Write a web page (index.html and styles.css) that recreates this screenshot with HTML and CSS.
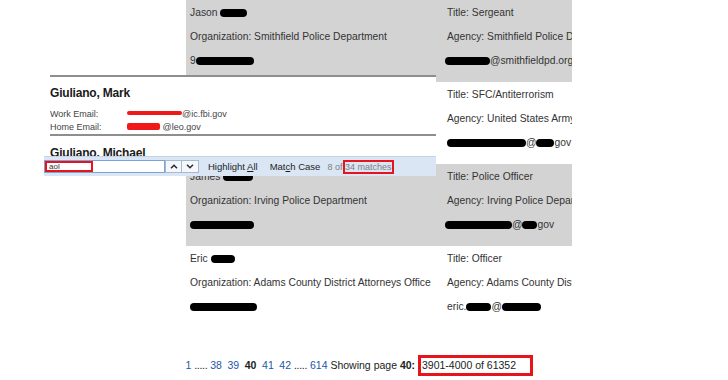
FILE: index.html
```html
<!DOCTYPE html>
<html lang="en">
<head>
    <meta charset="UTF-8">
    <meta name="viewport" content="width=device-width, initial-scale=1.0">
    <title>Directory search results</title>
    <link rel="stylesheet" href="styles.css">
</head>
<body>
    <div class="page">
        <div class="results">
            <div class="row alt">
                <div class="cell person">
                    <p>Jason <span class="ink" style="width:27px"></span></p>
                    <p>Organization: Smithfield Police Department</p>
                    <p>9<span class="ink" style="width:58px"></span></p>
                </div>
                <div class="cell contact">
                    <p>Title: Sergeant</p>
                    <p>Agency: Smithfield Police Department</p>
                    <p><span class="ink lead" style="width:45px"></span>@smithfieldpd.org</p>
                </div>
            </div>
            <div class="row">
                <div class="cell person"></div>
                <div class="cell contact">
                    <p>Title: SFC/Antiterrorism</p>
                    <p>Agency: United States Army</p>
                    <p><span class="ink" style="width:79px"></span>@<span class="ink" style="width:18px"></span>gov</p>
                </div>
            </div>
            <div class="row alt">
                <div class="cell person">
                    <p>James <span class="ink" style="width:30px"></span></p>
                    <p>Organization: Irving Police Department</p>
                    <p><span class="ink" style="width:64px"></span></p>
                </div>
                <div class="cell contact">
                    <p>Title: Police Officer</p>
                    <p>Agency: Irving Police Department</p>
                    <p><span class="ink lead" style="width:67px"></span>@<span class="ink" style="width:15px"></span>gov</p>
                </div>
            </div>
            <div class="row">
                <div class="cell person">
                    <p>Eric <span class="ink" style="width:24px"></span></p>
                    <p>Organization: Adams County District Attorneys Office</p>
                    <p><span class="ink" style="width:67px"></span></p>
                </div>
                <div class="cell contact">
                    <p>Title: Officer</p>
                    <p>Agency: Adams County District Attorneys Office</p>
                    <p>eric.<span class="ink" style="width:25px"></span>@<span class="ink" style="width:39px"></span></p>
                </div>
            </div>
        </div>

        <div class="pager">
            <a class="n" href="#">1</a> <span class="dots">.....</span> <a class="n" href="#">38</a> <a class="n" href="#">39</a> <b class="n">40</b> <a class="n" href="#">41</a> <a class="n" href="#">42</a> <span class="dots">.....</span> <a class="n" href="#">614</a> Showing page <b>40:</b> <span class="marked">3901-4000 of 61352</span>
        </div>

        <!-- pasted screenshot of the address book with the find bar open -->
        <div class="shot">
            <div class="cards">
                <div class="card">
                    <h4>Giuliano, Mark</h4>
                    <div class="mail">
                        <div><span class="label">Work Email:</span><span class="scrub work"></span>@ic.fbi.gov</div>
                        <div><span class="label">Home Email:</span><span class="scrub home"></span> @leo.gov</div>
                    </div>
                </div>
                <div class="card">
                    <h4>Giuliano. Michael</h4>
                </div>
            </div>
            <div class="findbar">
                <div class="findfield"><span class="hit">aol</span></div>
                <div class="step">
                    <svg width="8" height="5" viewBox="0 0 8 5"><polyline points="1,4.2 4,1.2 7,4.2" fill="none" stroke="#2b2b2b" stroke-width="1.5"/></svg>
                </div>
                <div class="step">
                    <svg width="8" height="5" viewBox="0 0 8 5"><polyline points="1,0.8 4,3.8 7,0.8" fill="none" stroke="#2b2b2b" stroke-width="1.5"/></svg>
                </div>
                <span class="opt first">Highlight <u>A</u>ll</span>
                <span class="opt">Mat<u>c</u>h Case</span>
                <span class="count">8 of <span class="boxed">34 matches</span></span>
            </div>
        </div>
    </div>
</body>
</html>
```

FILE: styles.css
```css
body {
    margin: 0;
    background-color: #fff;
    font-family: 'Liberation Sans', Arial, sans-serif;
    color: #333;
}
.page {
    position: relative;
    width: 728px;
    height: 380px;
    overflow: hidden;
}
.results {
    margin-left: 186px;
    width: 386px;
    overflow: hidden;
}
.row {
    display: flex;
    height: 82px;
    box-sizing: border-box;
    padding-top: 1px;
}
.row.alt {
    background-color: #d3d3d3;
}
.cell {
    box-sizing: border-box;
    padding-left: 4px;
    font-size: 10.3px;
    white-space: nowrap;
    overflow: hidden;
}
.cell p {
    margin: 0;
    line-height: 24px;
}
.person {
    width: 257px;
}
.contact {
    width: 129px;
}
.ink {
    display: inline-block;
    height: 8px;
    background-color: #000;
    border-radius: 5px;
    vertical-align: -1px;
}
.ink.lead {
    margin-left: -2px;
}
.pager {
    margin-top: 27px;
    padding-left: 185.4px;
    font-size: 10.5px;
    line-height: 21px;
    white-space: nowrap;
    color: #222;
}
.pager a {
    color: #2357a6;
    text-decoration: none;
}
.pager .n + .n {
    margin-left: 2.7px;
}
.dots {
    letter-spacing: -0.3px;
}
.marked {
    display: inline-block;
    border: 3px solid #e8141c;
    line-height: 15px;
    padding: 0 14px 0 1px;
}
.shot {
    position: absolute;
    left: 44px;
    top: 75px;
    width: 392px;
    background-color: #fff;
}
.cards {
    height: 81px;
    margin-left: 6px;
    overflow: hidden;
    color: #1a1a1a;
}
.card {
    border-top: 2px solid #8e8e8e;
}
.card h4 {
    margin: 9px 0 0;
    font-size: 12px;
    line-height: 14px;
    letter-spacing: -0.2px;
}
.card + .card h4 {
    margin-top: 10px;
}
.mail {
    margin-top: 8px;
    font-size: 9px;
    line-height: 13px;
    color: #444;
}
.mail .label {
    display: inline-block;
    width: 77px;
}
.scrub {
    display: inline-block;
    background-color: #f01818;
    border-radius: 2px;
}
.scrub.work {
    width: 55px;
    height: 4px;
    vertical-align: 2px;
}
.scrub.home {
    width: 33px;
    height: 7px;
    vertical-align: 0;
}
.findbar {
    display: flex;
    align-items: center;
    height: 19px;
    border-top: 1px solid #c4d4ea;
    background-color: #dae6f4;
    font-size: 9.5px;
    color: #1e1e1e;
}
.findfield {
    width: 121px;
    height: 13px;
    box-sizing: border-box;
    border: 1px solid #7ba3d6;
    background-color: #fff;
    display: flex;
    align-items: center;
}
.hit {
    width: 48px;
    height: 11px;
    box-sizing: border-box;
    border: 2px solid #e8141c;
    font-size: 8px;
    line-height: 7px;
    padding-left: 2px;
    color: #333;
}
.step {
    width: 17px;
    height: 13px;
    box-sizing: border-box;
    border: 1px solid #a7b9d1;
    background-color: #f4f7fb;
    display: flex;
    align-items: center;
    justify-content: center;
}
.step + .step {
    border-left: none;
}
.opt {
    margin-left: 12px;
}
.opt.first {
    margin-left: 9px;
}
.count {
    margin-left: 7px;
    font-size: 9px;
    color: #808080;
}
.boxed {
    border: 2px solid #e8141c;
    padding: 0 1px 0 0;
    margin-left: -2px;
}
```
